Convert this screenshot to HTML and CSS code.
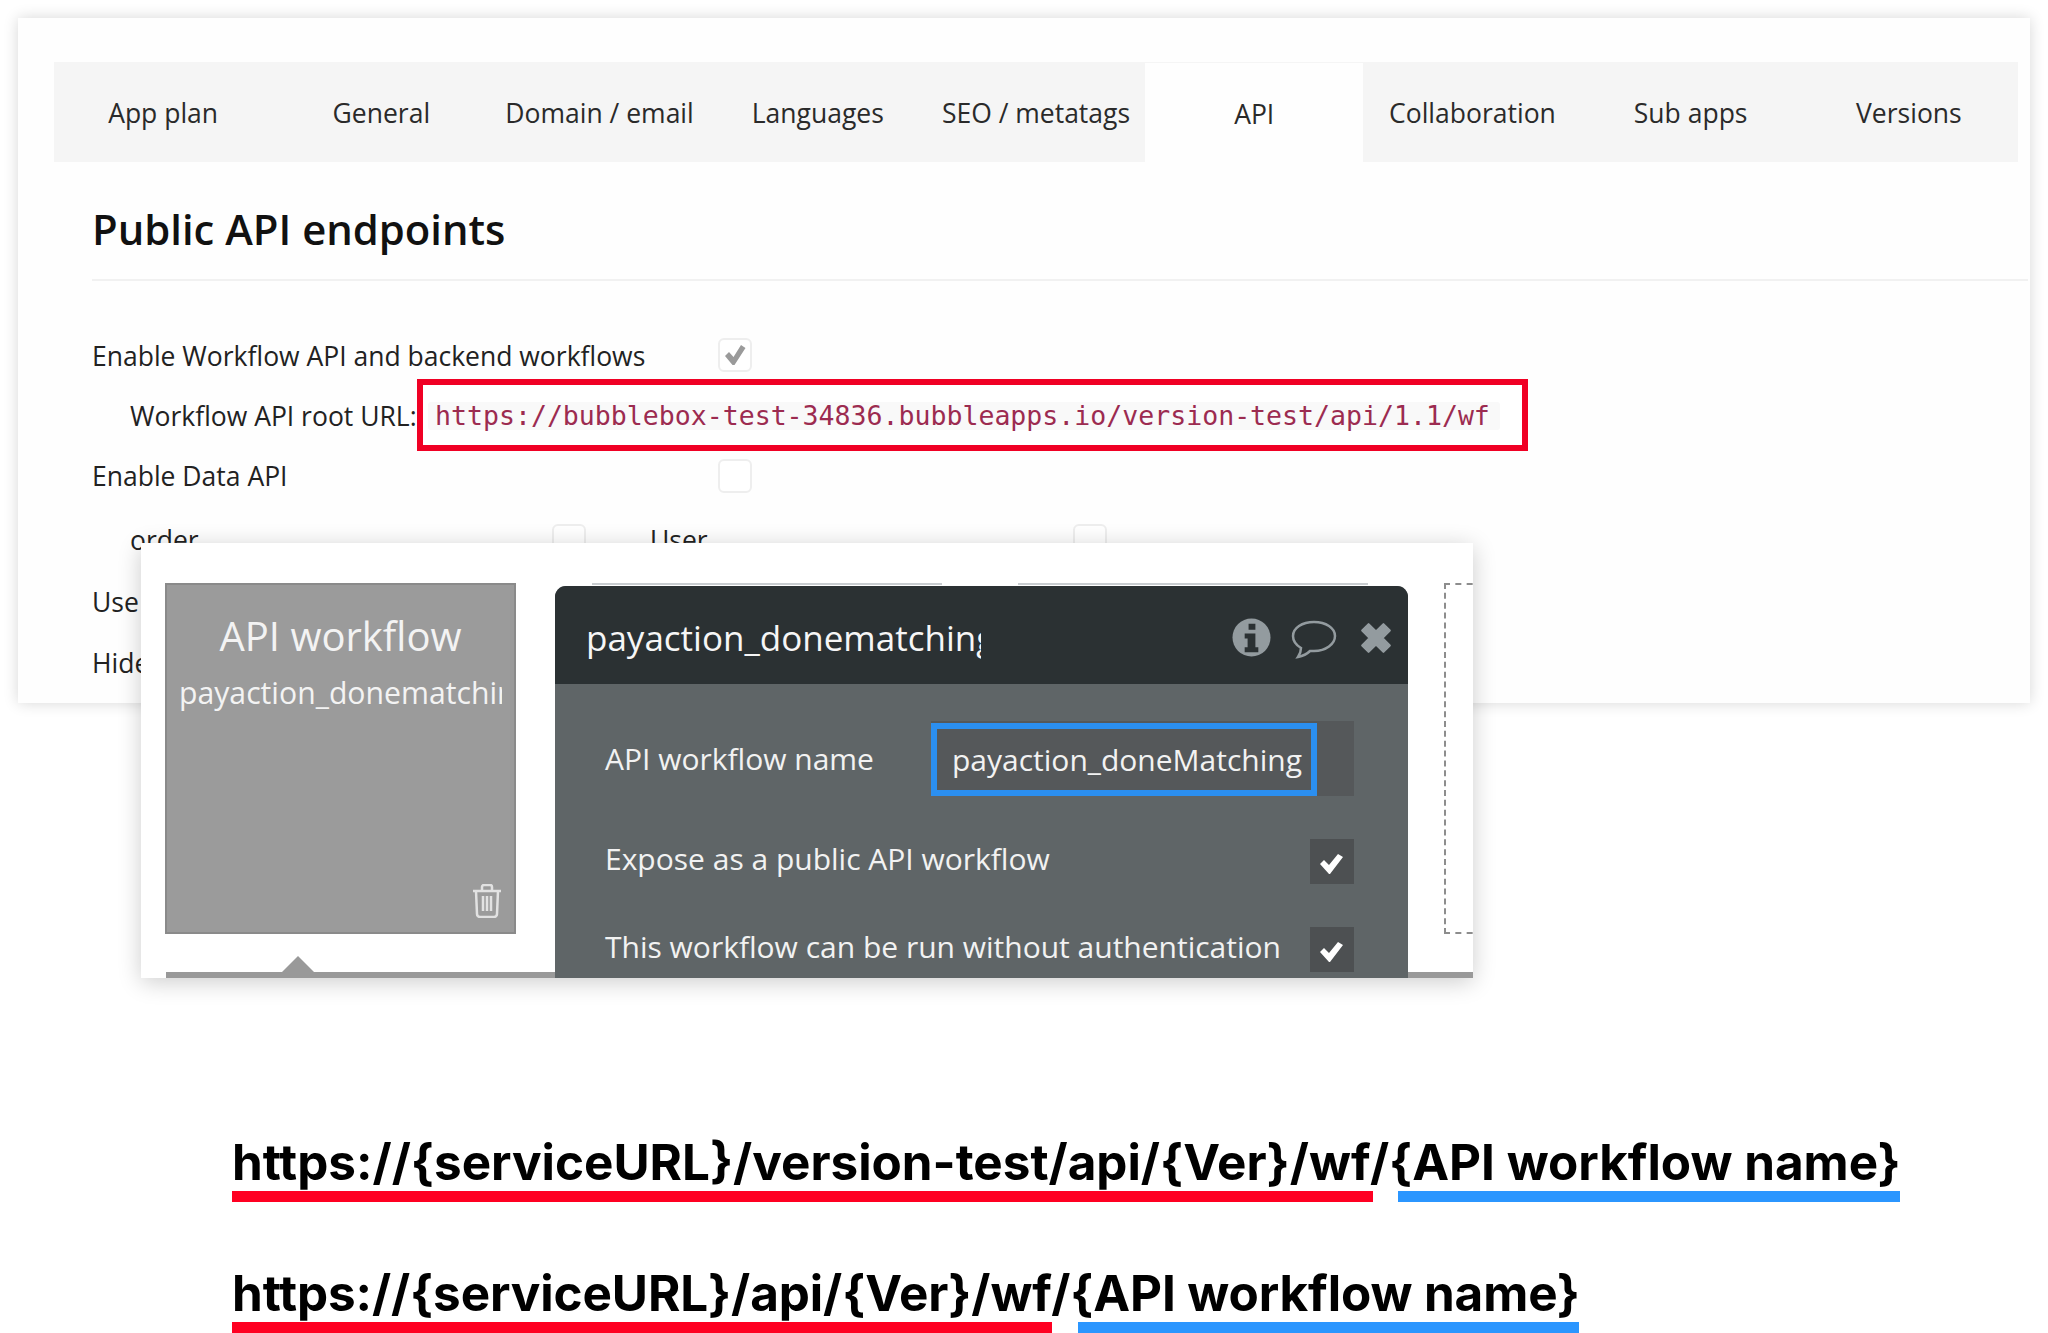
FILE: index.html
```html
<!DOCTYPE html>
<html lang="en">
<head>
<meta charset="utf-8">
<title>Public API endpoints</title>
<link rel="stylesheet" href="styles.css">
</head>
<body>
<div class="page">
  <section class="panel">
    <nav class="tabs">
      <div class="tab">App plan</div>
      <div class="tab">General</div>
      <div class="tab">Domain / email</div>
      <div class="tab">Languages</div>
      <div class="tab">SEO / metatags</div>
      <div class="tab active">API</div>
      <div class="tab">Collaboration</div>
      <div class="tab">Sub apps</div>
      <div class="tab">Versions</div>
    </nav>
    <div class="content">
      <h1 class="title">Public API endpoints</h1>
      <div class="row row-first">
        <span class="label">Enable Workflow API and backend workflows</span>
        <span class="check">
          <svg viewBox="0 0 24 24" class="check-icon"><path d="M2 13l4-4 4.500 5L18 2l4.500 3-11 17h-2z" fill="#9a9a9a"/></svg>
        </span>
      </div>
      <div class="row row-url">
        <span class="label sub">Workflow API root URL:</span>
        <div class="url-box"><code class="url">https://bubblebox-test-34836.bubbleapps.io/version-test/api/1.1/wf</code></div>
      </div>
      <div class="row row-data">
        <span class="label">Enable Data API</span>
        <span class="check"></span>
      </div>
      <div class="row row-types">
        <span class="label sub type-a">order</span>
        <span class="check"></span>
        <span class="label type-b">User</span>
        <span class="check"></span>
      </div>
      <div class="row row-use"><span class="label">Use</span></div>
      <div class="row row-hide"><span class="label">Hide</span></div>
    </div>
  </section>

  <section class="editor">
    <div class="ghost ghost-a"></div>
    <div class="ghost ghost-b"></div>
    <div class="card">
      <div class="card-title">API workflow</div>
      <div class="card-name">payaction_donematching</div>
      <svg class="trash" viewBox="0 0 30 34" fill="none" stroke="#e2e2e2" stroke-width="2.500">
        <path d="M1 7h28M4 7l1 23a3 3 0 0 0 3 3h14a3 3 0 0 0 3-3l1-23M10 7V3a2 2 0 0 1 2-2h6a2 2 0 0 1 2 2v4M11 12v15M15 12v15M19 12v15"/>
      </svg>
    </div>
    <div class="dialog">
      <header class="dialog-head">
        <div class="dialog-title">payaction_donematching</div>
        <div class="dialog-icons">
          <svg class="ic-info" viewBox="0 0 40 40"><circle cx="20" cy="20" r="19.500" fill="#939b9f"/><path d="M17 6h7v6h-7zM13 16h11v14h3v5H13v-5h3v-9h-3z" fill="#2b3133"/></svg>
          <svg class="ic-bubble" viewBox="0 0 46 40" fill="none" stroke="#939b9f" stroke-width="2.500"><path d="M23 2C11 2 2 8 2 16c0 5 3 9 8 12 0 3-1 6-3 9 5-1 9-3 12-6 1 0 3 0 4 0 12 0 21-7 21-15S35 2 23 2z"/></svg>
          <svg class="ic-close" viewBox="0 0 32 32"><path d="M3 9l6-6 7 7 7-7 6 6-7 7 7 7-6 6-7-7-7 7-6-6 7-7z" fill="#939b9f" stroke="#939b9f" stroke-width="2" stroke-linejoin="round"/></svg>
        </div>
      </header>
      <div class="dialog-body">
        <div class="field">
          <span class="field-label">API workflow name</span>
          <div class="input-wrap"><div class="input">payaction_doneMatching</div></div>
        </div>
        <div class="field option">
          <span class="field-label">Expose as a public API workflow</span>
          <span class="tick"><svg viewBox="0 0 24 24"><path d="M1 13l4-4 5 5L19 3l5 3-13 17h-1z" fill="#fff"/></svg></span>
        </div>
        <div class="field option option-2">
          <span class="field-label">This workflow can be run without authentication</span>
          <span class="tick"><svg viewBox="0 0 24 24"><path d="M1 13l4-4 5 5L19 3l5 3-13 17h-1z" fill="#fff"/></svg></span>
        </div>
      </div>
    </div>
    <div class="dashed"></div>
    <div class="timeline"><span class="caret"></span></div>
  </section>

  <section class="formulas">
    <div class="formula">
      <div class="formula-text">https://{serviceURL}/version-test/api/{Ver}/wf/{API workflow name}</div>
      <div class="bars"><span class="bar red w-long"></span><span class="bar blue w-name"></span></div>
    </div>
    <div class="formula second">
      <div class="formula-text">https://{serviceURL}/api/{Ver}/wf/{API workflow name}</div>
      <div class="bars"><span class="bar red w-short"></span><span class="bar blue w-name-2"></span></div>
    </div>
  </section>
</div>
</body>
</html>
```

FILE: styles.css
```css
* { box-sizing: border-box; }
html, body { margin: 0; padding: 0; background: #fff; }
body { font-family: "Open Sans", sans-serif; color: #222; }
.page { position: relative; width: 2048px; height: 1333px; overflow: hidden; }

.panel {
  margin: 18px 18px 0;
  width: 2012px;
  height: 685px;
  padding: 44px 12px 0 36px;
  background: #fefefe;
  box-shadow: 0 0 14px rgba(0, 0, 0, .16);
  overflow: hidden;
}
.tabs {
  display: grid;
  grid-template-columns: repeat(9, 1fr);
  height: 100px;
  background: #f5f5f5;
}
.tab {
  display: flex;
  align-items: center;
  justify-content: center;
  padding-top: 2px;
  font-size: 26.500px;
  color: #2a2a2a;
  white-space: nowrap;
}
.tab.active { background: #fefefe; margin-top: 1px; }

.content { padding-left: 38px; margin-right: -10px; }
.title {
  margin: 0;
  height: 119px;
  padding-top: 36px;
  font-size: 41.800px;
  line-height: 62px;
  font-weight: 600;
  color: #111;
  border-bottom: 2px solid #f1f1f1;
}
.row { display: flex; align-items: center; font-size: 26.500px; color: #222; white-space: nowrap; }
.row-first { margin-top: 57px; height: 34px; }
.row-url { margin-top: 7px; height: 72px; }
.row-data { margin-top: 8px; height: 33px; }
.row-types { margin-top: 32px; height: 33px; }
.row-use { margin-top: 25px; height: 40px; }
.row-hide { margin-top: 21px; height: 40px; }
.label { width: 626px; flex: none; }
.row-first .label, .row-url .label { padding-top: 1px; }
.sub { padding-left: 38px; }
.row-url .label { width: 325px; }
.row-types .label { margin-top: -2px; }
.row-types .type-a { width: 460px; }
.row-types .type-b { width: 487px; padding-left: 64px; }
.check {
  width: 34px;
  height: 34px;
  flex: none;
  display: flex;
  align-items: center;
  justify-content: center;
  background: #fff;
  border: 2px solid #eeeeee;
  border-radius: 6px;
}
.check-icon { width: 24px; height: 24px; }

.url-box {
  width: 1111px;
  height: 72px;
  border: 6px solid #f00024;
  background: #fff;
  display: flex;
  align-items: center;
  padding: 2px 0 0 5px;
}
.url {
  font-family: "DejaVu Sans Mono", "Liberation Mono", monospace;
  font-size: 26.550px;
  line-height: 28px;
  color: #9c2b50;
  background: #f9f9f9;
  padding: 0 10px 0 7px;
  border-radius: 3px;
}

.editor {
  position: absolute;
  left: 141px;
  top: 543px;
  width: 1332px;
  height: 435px;
  padding: 40px 0 0 24px;
  display: flex;
  align-items: flex-start;
  background: #fff;
  box-shadow: 0 4px 22px rgba(0, 0, 0, .2);
  overflow: hidden;
}
.card {
  position: relative;
  width: 351px;
  height: 351px;
  flex: none;
  background: #9b9b9b;
  border: 2px solid #8a8a8a;
  color: #f3f3f3;
  text-align: center;
  padding: 0 12px;
}
.card-title { margin-top: 24px; font-size: 40px; line-height: 54px; }
.card-name {
  margin-top: 9px;
  font-size: 30.200px;
  line-height: 42px;
  white-space: nowrap;
  overflow: hidden;
  text-align: left;
}
.trash { position: absolute; right: 12px; bottom: 14px; width: 30px; height: 34px; }

.ghost { position: absolute; top: 40px; width: 350px; height: 10px; border-top: 2px solid #c9cdd0; }
.ghost-a { left: 451px; }
.ghost-b { left: 877px; }

.dialog {
  position: relative;
  z-index: 1;
  width: 853px;
  height: 392px;
  margin: 3px 0 0 39px;
  flex: none;
  background: #5f6567;
  border-radius: 11px 11px 0 0;
  overflow: hidden;
  color: #f2f2f2;
}
.dialog-head {
  height: 98px;
  background: #2b3133;
  display: flex;
  align-items: center;
  justify-content: space-between;
  padding: 5px 15px 0 31px;
}
.dialog-title {
  width: 395px;
  overflow: hidden;
  white-space: nowrap;
  font-size: 35px;
  line-height: 50px;
  color: #f6f6f6;
}
.dialog-icons { display: flex; align-items: center; }
.ic-info { width: 39px; height: 39px; }
.ic-bubble { width: 46px; height: 40px; margin-left: 20px; margin-top: 4px; }
.ic-close { width: 34px; height: 34px; margin-left: 22px; }

.dialog-body { padding: 37px 54px 0 50px; }
.field { display: flex; align-items: center; justify-content: space-between; height: 75px; font-size: 30px; white-space: nowrap; }
.field-label { display: block; }
.option .field-label { margin-top: -6px; }
.input-wrap { width: 423px; height: 75px; background: #55585a; }
.input {
  width: 386px;
  height: 73px;
  margin-top: 2px;
  border: 6px solid #2b8ff0;
  background: #55585a;
  padding-left: 15px;
  font-size: 30px;
  line-height: 62px;
  overflow: hidden;
}
.option { height: 45px; margin-top: 43px; }
.option-2 { margin-top: 43px; }
.tick {
  width: 44px;
  height: 45px;
  background: #4d5052;
  display: flex;
  align-items: center;
  justify-content: center;
}
.tick svg { width: 26px; height: 24px; margin-left: -2px; margin-top: 2px; }

.dashed {
  width: 40px;
  height: 351px;
  margin-left: 36px;
  flex: none;
  border: 2px dashed #8d8d8d;
  border-right: 0;
}
.timeline {
  position: absolute;
  left: 25px;
  right: 0;
  bottom: 0;
  height: 6px;
  background: #999;
}
.caret {
  position: absolute;
  left: 116px;
  bottom: 6px;
  width: 0;
  height: 0;
  border-left: 16px solid transparent;
  border-right: 16px solid transparent;
  border-bottom: 16px solid #999;
}

.formulas { margin-top: 433px; padding-left: 232px; }
.formula { height: 66px; }
.second { margin-top: 65px; }
.formula-text {
  font-family: "Inter", "Liberation Sans", sans-serif;
  font-weight: 700;
  font-size: 49.400px;
  line-height: 52px;
  color: #000;
  white-space: nowrap;
}
.second .formula-text { letter-spacing: -.1px; }
.bars { display: flex; height: 11px; margin-top: 3px; }
.bar { display: block; height: 11px; }
.red { background: #ff0022; }
.blue { background: #2b96ff; }
.w-long { width: 1141px; margin-right: 25px; }
.w-name { width: 502px; }
.w-short { width: 820px; margin-right: 26px; }
.w-name-2 { width: 501px; }
```
